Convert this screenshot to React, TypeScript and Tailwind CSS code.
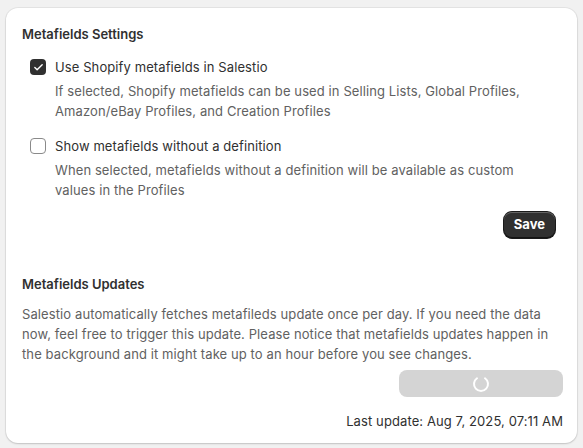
import { Check } from "lucide-react";

const font = { fontFamily: "Inter, 'Noto Sans', sans-serif" };

function Checkbox({ checked }: { checked: boolean }) {
  return checked ? (
    <span className="flex h-4 w-4 shrink-0 items-center justify-center rounded-[4px] bg-[#303030]">
      <Check className="h-[11px] w-[11px] text-white" strokeWidth={3} />
    </span>
  ) : (
    <span className="h-4 w-4 shrink-0 rounded-[4px] border border-[#8a8a8a] bg-white" />
  );
}

function Option({
  checked,
  label,
  help,
}: {
  checked: boolean;
  label: string;
  help: string;
}) {
  return (
    <div className="pl-2">
      <div className="flex items-center gap-[9px]">
        <Checkbox checked={checked} />
        <span className="text-[13px] leading-5 tracking-[0.1px] text-[#303030]">{label}</span>
      </div>
      <p className="mt-1 pl-[25px] pr-6 text-[13px] leading-5 tracking-[0.1px] text-[#616161]">{help}</p>
    </div>
  );
}

function Spinner() {
  return (
    <svg width="20" height="20" viewBox="0 0 20 20" fill="none">
      <path
        d="M6 4.3 A7 7 0 1 0 14 4.3"
        stroke="white"
        strokeWidth="2"
        strokeLinecap="round"
      />
    </svg>
  );
}

export default function App() {
  return (
    <div className="min-h-[448px] bg-[#f1f1f1] px-[6px] pt-2" style={font}>
      <div className="rounded-xl bg-white pb-3 pl-4 pr-[14px] pt-4 shadow-[0_0_0_1px_rgba(0,0,0,0.05),0_1px_2px_rgba(0,0,0,0.15)]">
        <h2 className="text-[13px] font-semibold leading-5 text-[#303030]">Metafields Settings</h2>
        <div className="mt-[13px] flex flex-col gap-[15px]">
          <Option
            checked
            label="Use Shopify metafields in Salestio"
            help="If selected, Shopify metafields can be used in Selling Lists, Global Profiles, Amazon/eBay Profiles, and Creation Profiles"
          />
          <Option
            checked={false}
            label="Show metafields without a definition"
            help="When selected, metafields without a definition will be available as custom values in the Profiles"
          />
        </div>
        <div className="mt-3 flex justify-end pr-[8px]">
          <button
            type="button"
            className="h-[26px] rounded-lg bg-[#303030] px-[10px] text-[13px] font-bold text-white shadow-[inset_0_1px_0_rgba(255,255,255,0.25),inset_0_-1px_0_rgba(0,0,0,0.6),0_0_0_1px_#1a1a1a]"
          >
            Save
          </button>
        </div>

        <h2 className="mt-[36px] text-[13px] font-semibold leading-5 text-[#303030]">Metafields Updates</h2>
        <p className="mt-[10px] text-[13px] leading-5 tracking-[0.1px] text-[#616161]">
          Salestio automatically fetches metafileds update once per day. If you need the data now, feel free to trigger
          this update. Please notice that metafields updates happen in the background and it might take up to an hour
          before you see changes.
        </p>
        <div className="mt-[6px] flex justify-end">
          <div className="flex h-[27px] w-[164px] items-center justify-center rounded-lg bg-[#d4d4d4]">
            <Spinner />
          </div>
        </div>
        <p className="mt-[14px] text-right text-[13px] leading-5 tracking-[0.1px] text-[#303030]">
          Last update: Aug 7, 2025, 07:11 AM
        </p>
      </div>
    </div>
  );
}
